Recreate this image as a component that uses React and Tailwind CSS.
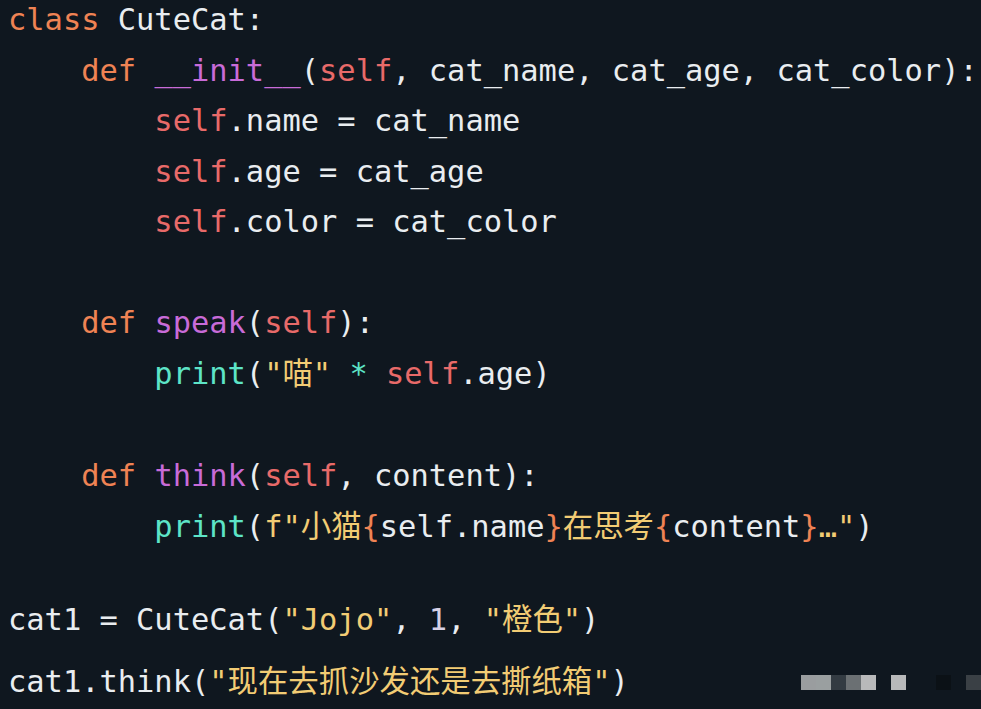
const C = {
  kw: 'text-[#ef8354]',
  self: 'text-[#e86a69]',
  fn: 'text-[#c86bd8]',
  bi: 'text-[#5de4c7]',
  str: 'text-[#f2cc74]',
  txt: 'text-[#e9edf0]',
  num: 'text-[#d6d1e6]',
}

// each line is a list of [text, colorKey]
const lines = [
  { h: 'h-[50.5px]', parts: [['class', 'kw'], [' CuteCat:', 'txt']] },
  {
    h: 'h-[50.5px]',
    parts: [
      ['    def', 'kw'], [' ', 'txt'], ['__init__', 'fn'], ['(', 'txt'], ['self', 'self'],
      [', cat_name, cat_age, cat_color):', 'txt'],
    ],
  },
  { h: 'h-[50.5px]', parts: [['        self', 'self'], ['.name = cat_name', 'txt']] },
  { h: 'h-[50.5px]', parts: [['        self', 'self'], ['.age = cat_age', 'txt']] },
  { h: 'h-[50.5px]', parts: [['        self', 'self'], ['.color = cat_color', 'txt']] },
  { h: 'h-[50.5px]', parts: [] },
  {
    h: 'h-[50.5px]',
    parts: [['    def', 'kw'], [' ', 'txt'], ['speak', 'fn'], ['(', 'txt'], ['self', 'self'], ['):', 'txt']],
  },
  {
    h: 'h-[50.5px]',
    parts: [
      ['        print', 'bi'], ['(', 'txt'], ['"喵"', 'str'], [' ', 'txt'], ['*', 'bi'], [' ', 'txt'],
      ['self', 'self'], ['.age)', 'txt'],
    ],
  },
  { h: 'h-[52px]', parts: [] },
  {
    h: 'h-[50.5px]',
    parts: [
      ['    def', 'kw'], [' ', 'txt'], ['think', 'fn'], ['(', 'txt'], ['self', 'self'], [', content):', 'txt'],
    ],
  },
  {
    h: 'h-[50.5px]',
    parts: [
      ['        print', 'bi'], ['(', 'txt'], ['f"小猫', 'str'], ['{', 'kw'], ['self.name', 'txt'], ['}', 'kw'],
      ['在思考', 'str'], ['{', 'kw'], ['content', 'txt'], ['}', 'kw'], ['…"', 'str'], [')', 'txt'],
    ],
  },
  { h: 'h-[30px]', parts: [] },
  {
    h: 'h-[75px]',
    parts: [
      ['cat1 = CuteCat(', 'txt'], ['"Jojo"', 'str'], [', ', 'txt'], ['1', 'num'], [', ', 'txt'],
      ['"橙色"', 'str'], [')', 'txt'],
    ],
  },
  {
    h: 'h-[50px]',
    parts: [['cat1.think(', 'txt'], ['"现在去抓沙发还是去撕纸箱"', 'str'], [')', 'txt']],
    blur: true,
  },
]

const blocks = [
  'bg-[#9a9d9f]', 'bg-[#9a9fa0]', 'bg-[#333b42]', 'bg-[#6b7073]', 'bg-[#b8b9ba]',
  'bg-transparent', 'bg-[#b8b9ba]', 'bg-transparent', 'bg-transparent', 'bg-[#0b1116]',
  'bg-transparent', 'bg-[#3a4045]',
]

export default function App() {
  return (
    <div className="w-[981px] h-[709px] overflow-hidden bg-[#0f171f] font-['DejaVu_Sans_Mono','Noto_Sans_CJK_SC',monospace] text-[30.4px]">
      <div className="flex flex-col pl-2 -mt-[5px]">
        {lines.map((line, i) => (
          <div key={i} className={`${line.h} flex items-center justify-between whitespace-pre`}>
            <span>
              {line.parts.map(([t, c], j) => (
                <span key={j} className={C[c]}>{t}</span>
              ))}
            </span>
            {line.blur && (
              <div className="flex h-[15px]">
                {blocks.map((b, k) => (
                  <div key={k} className={`w-[15px] h-[15px] ${b}`} />
                ))}
              </div>
            )}
          </div>
        ))}
      </div>
    </div>
  )
}
